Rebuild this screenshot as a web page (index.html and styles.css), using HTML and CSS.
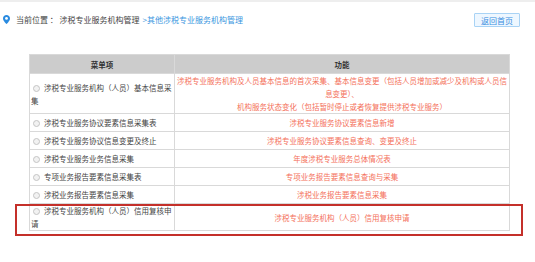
FILE: index.html
```html
<!DOCTYPE html>
<html>
<head>
    <title>其他涉税专业服务机构管理</title>
    <link rel="stylesheet" href="styles.css">
</head>
<body>
    <div class="top-line"></div>
    <div class="crumb-bar">
        <div class="crumb">
            <svg class="pin" width="7" height="9" viewBox="0 0 7 9">
                <path d="M3.5 0C1.6 0 0 1.5 0 3.4 0 5.8 3.5 9 3.5 9S7 5.8 7 3.4C7 1.5 5.4 0 3.5 0z" fill="#2a8be0"/>
                <circle cx="3.5" cy="3.4" r="1.4" fill="#fff"/>
            </svg>
            <span class="crumb-label">当前位置 ： 涉税专业服务机构管理</span>
            <span class="crumb-link">&gt;其他涉税专业服务机构管理</span>
        </div>
        <button class="back-btn">返回首页</button>
    </div>

    <div class="table-wrap">
        <table class="menu-table">
            <thead>
                <tr>
                    <th class="col-menu">菜单项</th>
                    <th>功能</th>
                </tr>
            </thead>
            <tbody>
                <tr>
                    <td class="item"><span class="radio"></span>涉税专业服务机构（人员）基本信息采集</td>
                    <td class="func">涉税专业服务机构及人员基本信息的首次采集、基本信息变更（包括人员增加或减少及机构或人员信息变更）、<br>机构服务状态变化（包括暂时停止或者恢复提供涉税专业服务）</td>
                </tr>
                <tr>
                    <td class="item"><span class="radio"></span>涉税专业服务协议要素信息采集表</td>
                    <td class="func">涉税专业服务协议要素信息新增</td>
                </tr>
                <tr>
                    <td class="item"><span class="radio"></span>涉税专业服务协议信息变更及终止</td>
                    <td class="func">涉税专业服务协议要素信息查询、变更及终止</td>
                </tr>
                <tr>
                    <td class="item"><span class="radio"></span>涉税专业服务业务信息采集</td>
                    <td class="func">年度涉税专业服务总体情况表</td>
                </tr>
                <tr>
                    <td class="item"><span class="radio"></span>专项业务报告要素信息采集表</td>
                    <td class="func">专项业务报告要素信息查询与采集</td>
                </tr>
                <tr>
                    <td class="item"><span class="radio"></span>涉税业务报告要素信息采集</td>
                    <td class="func">涉税业务报告要素信息采集</td>
                </tr>
                <tr>
                    <td class="item"><span class="radio"></span>涉税专业服务机构（人员）信用复核申请</td>
                    <td class="func">涉税专业服务机构（人员）信用复核申请</td>
                </tr>
            </tbody>
        </table>
        <div class="mark-box"></div>
    </div>
</body>
</html>
```

FILE: styles.css
```css
body {
    margin: 0;
    padding-bottom: 30px;
    background-color: #fff;
    font-family: "Noto Sans CJK SC", "Noto Sans", sans-serif;
    color: #444;
}

.top-line {
    height: 2px;
    background-color: #eeeeee;
}

.crumb-bar {
    display: flex;
    align-items: center;
    justify-content: space-between;
    padding: 10px 15px 0 3px;
    height: 16px;
}

.crumb {
    display: flex;
    align-items: center;
    font-size: 8px;
    line-height: 12px;
}

.pin {
    margin-right: 6px;
    margin-top: -1px;
}

.crumb-label {
    color: #444;
    white-space: pre;
}

.crumb-link {
    color: #3a96e0;
    margin-left: 3px;
}

.back-btn {
    font-family: inherit;
    font-size: 8px;
    line-height: 11px;
    color: #3a8ee0;
    background-color: #eef7ff;
    border: 1px solid #a9d3f5;
    border-radius: 1px;
    padding: 0 6px;
    height: 14px;
    white-space: nowrap;
}

.table-wrap {
    position: relative;
    margin: 26px 0 0 29px;
    width: 481px;
}

.menu-table {
    width: 481px;
    border-collapse: collapse;
    table-layout: fixed;
    font-size: 7.5px;
    line-height: 13px;
    border: 1px solid #d9d9d9;
}

.menu-table th {
    background-color: #cccccc;
    color: #333;
    font-weight: bold;
    height: 18px;
    padding: 0;
    border: 1px solid #d9d9d9;
}

.menu-table .col-menu {
    width: 144px;
}

.menu-table td {
    height: 17px;
    padding: 0 1px;
    border: 1px solid #d9d9d9;
    vertical-align: middle;
}

.menu-table .item {
    color: #444;
    padding-right: 2.5px;
}

.menu-table .func {
    color: #f4705a;
    text-align: center;
}

.radio {
    display: inline-block;
    width: 5px;
    height: 5px;
    margin: 0 4px 0 2px;
    border: 1px solid #c4c4c4;
    border-radius: 50%;
    background-color: #f2f2f2;
    vertical-align: -1px;
}

.mark-box {
    position: absolute;
    left: -14px;
    right: -13px;
    bottom: -5px;
    height: 28px;
    border: 2px solid #c4302a;
}
```
